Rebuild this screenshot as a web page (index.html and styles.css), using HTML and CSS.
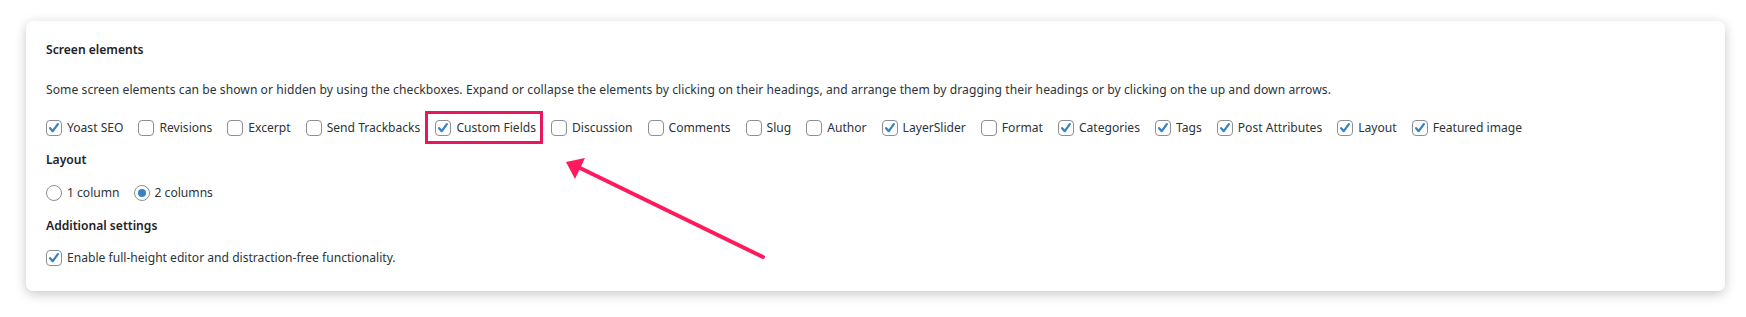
FILE: index.html
```html
<!DOCTYPE html>
<html lang="en">
<head>
<meta charset="utf-8">
<title>Screen options</title>
<link rel="stylesheet" href="styles.css">
</head>
<body>
<div class="stage">
  <div class="card">
    <h2 class="title">Screen elements</h2>
    <p class="desc">Some screen elements can be shown or hidden by using the checkboxes. Expand or collapse the elements by clicking on their headings, and arrange them by dragging their headings or by clicking on the up and down arrows.</p>
    <div class="row">
      <label class="opt"><span class="box on"><svg viewBox="0 0 16 16"><path d="M3.6 8.2 L6.6 11.6 L12.4 3.6"/></svg></span>Yoast SEO</label>
      <label class="opt"><span class="box"></span>Revisions</label>
      <label class="opt"><span class="box"></span>Excerpt</label>
      <label class="opt"><span class="box"></span>Send Trackbacks</label>
      <label class="opt marked"><span class="box on"><svg viewBox="0 0 16 16"><path d="M3.6 8.2 L6.6 11.6 L12.4 3.6"/></svg></span>Custom Fields</label>
      <label class="opt"><span class="box"></span>Discussion</label>
      <label class="opt"><span class="box"></span>Comments</label>
      <label class="opt"><span class="box"></span>Slug</label>
      <label class="opt"><span class="box"></span>Author</label>
      <label class="opt"><span class="box on"><svg viewBox="0 0 16 16"><path d="M3.6 8.2 L6.6 11.6 L12.4 3.6"/></svg></span>LayerSlider</label>
      <label class="opt"><span class="box"></span>Format</label>
      <label class="opt"><span class="box on"><svg viewBox="0 0 16 16"><path d="M3.6 8.2 L6.6 11.6 L12.4 3.6"/></svg></span>Categories</label>
      <label class="opt"><span class="box on"><svg viewBox="0 0 16 16"><path d="M3.6 8.2 L6.6 11.6 L12.4 3.6"/></svg></span>Tags</label>
      <label class="opt"><span class="box on"><svg viewBox="0 0 16 16"><path d="M3.6 8.2 L6.6 11.6 L12.4 3.6"/></svg></span>Post Attributes</label>
      <label class="opt"><span class="box on"><svg viewBox="0 0 16 16"><path d="M3.6 8.2 L6.6 11.6 L12.4 3.6"/></svg></span>Layout</label>
      <label class="opt"><span class="box on"><svg viewBox="0 0 16 16"><path d="M3.6 8.2 L6.6 11.6 L12.4 3.6"/></svg></span>Featured image</label>
    </div>
    <h3 class="sub sub-layout">Layout</h3>
    <div class="row row-radio">
      <label class="opt"><span class="radio"></span>1 column</label>
      <label class="opt"><span class="radio on"></span>2 columns</label>
    </div>
    <h3 class="sub sub-add">Additional settings</h3>
    <div class="row row-last">
      <label class="opt"><span class="box on"><svg viewBox="0 0 16 16"><path d="M3.6 8.2 L6.6 11.6 L12.4 3.6"/></svg></span>Enable full-height editor and distraction-free functionality.</label>
    </div>
  </div>
  <svg class="arrow" viewBox="0 0 1746 317" width="1746" height="317">
    <line x1="763" y1="257" x2="578" y2="167"/>
    <polygon points="566,162 585,158 575,179"/>
  </svg>
</div>
</body>
</html>
```
FILE: styles.css
```css
html, body {
  margin: 0;
  padding: 0;
  background: #ffffff;
}
body {
  font-family: "Noto Sans", "Open Sans", "DejaVu Sans", sans-serif;
  font-size: 12.1px;
  color: #2c3338;
}
.stage {
  position: relative;
  width: 1746px;
  height: 317px;
  padding-top: 21px;
  box-sizing: border-box;
}
.card {
  margin-left: 26px;
  width: 1699px;
  height: 270px;
  box-sizing: border-box;
  background: #ffffff;
  border-radius: 7px;
  box-shadow: 0 3px 12px rgba(0, 0, 0, 0.22);
  padding: 19px 20px 0 20px;
}
.title {
  margin: 0;
  font-size: 12.1px;
  font-weight: 600;
  line-height: 20px;
  color: #1d2327;
}
.desc {
  margin: 20px 0 0 0;
  line-height: 20px;
  letter-spacing: 0.06px;
}
.row {
  display: flex;
  align-items: center;
  gap: 15px;
  margin-top: 18px;
  height: 20px;
}
.row-radio {
  margin-top: 13px;
  gap: 14px;
}
.row-last {
  margin-top: 12px;
}
.sub {
  margin: 0;
  font-size: 12.1px;
  font-weight: 600;
  line-height: 20px;
  color: #1d2327;
}
.sub-layout {
  margin-top: 12px;
}
.sub-add {
  margin-top: 13px;
}
.opt {
  display: flex;
  align-items: center;
  gap: 5px;
  white-space: nowrap;
  line-height: 20px;
}
.box {
  width: 16px;
  height: 16px;
  box-sizing: border-box;
  border: 1px solid #8c8f94;
  border-radius: 4px;
  background: #fff;
  display: flex;
  align-items: center;
  justify-content: center;
  flex: none;
}
.box svg {
  width: 14px;
  height: 14px;
  fill: none;
  stroke: #3582c4;
  stroke-width: 2.6;
  stroke-linecap: round;
  stroke-linejoin: round;
}
.radio {
  width: 16px;
  height: 16px;
  box-sizing: border-box;
  border: 1px solid #8c8f94;
  border-radius: 50%;
  background: #fff;
  display: flex;
  align-items: center;
  justify-content: center;
  flex: none;
}
.radio.on::before {
  content: "";
  width: 8px;
  height: 8px;
  border-radius: 50%;
  background: #3582c4;
}
.marked {
  position: relative;
}
.marked::after {
  content: "";
  position: absolute;
  left: -10px;
  right: -7px;
  top: -7px;
  bottom: -6px;
  border: 3px solid #e8175d;
}
.arrow {
  position: absolute;
  left: 0;
  top: 0;
  pointer-events: none;
}
.arrow line {
  stroke: #ff1a5e;
  stroke-width: 4;
  stroke-linecap: round;
}
.arrow polygon {
  fill: #ff1a5e;
}
```
